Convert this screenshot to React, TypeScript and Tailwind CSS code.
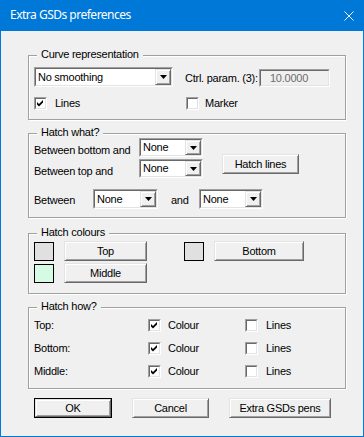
import React from "react";

const raised =
  "border border-t-[#e3e3e3] border-l-[#e3e3e3] border-b-[#696969] border-r-[#696969] bg-[#f0f0f0] shadow-[inset_1px_1px_0_#ffffff,inset_-1px_-1px_0_#a0a0a0]";
const sunkenOuter =
  "border border-t-[#a0a0a0] border-l-[#a0a0a0] border-b-[#ffffff] border-r-[#ffffff]";
const sunkenInner =
  "border border-t-[#696969] border-l-[#696969] border-b-[#e3e3e3] border-r-[#e3e3e3]";

function Combo({ className, text }: { className: string; text: string }) {
  return (
    <div className={`flex ${sunkenOuter} ${className}`}>
      <div className={`flex min-w-0 flex-1 bg-white ${sunkenInner}`}>
        <div className="flex flex-1 items-center overflow-hidden whitespace-nowrap pl-[2px]">
          {text}
        </div>
        <div className={`flex w-[16px] items-center justify-center ${raised}`}>
          <svg width="7" height="4" viewBox="0 0 7 4">
            <path d="M0 0H7L3.5 4Z" fill="#000" />
          </svg>
        </div>
      </div>
    </div>
  );
}

function Btn({ className, children }: { className: string; children: React.ReactNode }) {
  return (
    <div className={`flex items-center justify-center whitespace-nowrap ${raised} ${className}`}>
      {children}
    </div>
  );
}

function Check({ on }: { on?: boolean }) {
  return (
    <div className={`h-[13px] w-[13px] shrink-0 ${sunkenOuter}`}>
      <div className={`flex h-full w-full items-center justify-center bg-white ${sunkenInner}`}>
        {on && (
          <svg width="7" height="7" viewBox="0 0 7 7">
            <path d="M0 2L2 4L6 0L6 2.6L2 6.6L0 4.6Z" fill="#000" />
          </svg>
        )}
      </div>
    </div>
  );
}

function Swatch({ className }: { className: string }) {
  return <div className={`h-[19px] w-[20px] border border-black ${className}`} />;
}

function Group({
  title,
  className,
  children,
}: {
  title: string;
  className: string;
  children: React.ReactNode;
}) {
  return (
    <div
      className={`relative w-[318px] border border-[#a0a0a0] shadow-[inset_1px_1px_0_#ffffff,1px_1px_0_#ffffff] ${className}`}
    >
      <div className="absolute left-[8px] top-[-8px] whitespace-nowrap bg-[#f0f0f0] px-[4px]">
        {title}
      </div>
      {children}
    </div>
  );
}

function HowRow({ label }: { label: string }) {
  return (
    <div className="flex h-[23px] items-center">
      <div className="w-[114px]">{label}</div>
      <div className="flex w-[97px] items-center">
        <Check on />
        <span className="ml-[7px]">Colour</span>
      </div>
      <div className="flex items-center">
        <Check />
        <span className="ml-[8px]">Lines</span>
      </div>
    </div>
  );
}

export default function App() {
  return (
    <div className="flex h-[437px] w-[364px] flex-col bg-[#0078d7] px-[1px] pb-[1px] font-['Liberation_Sans',Arial,sans-serif] text-[11px] leading-[13px] tracking-[-0.25px] text-black">
      <div className="-mx-[1px] flex h-[31px] shrink-0 items-center pb-[2px] pl-[10px] pr-[10px] font-['Noto_Sans',sans-serif] text-[12px] leading-[16px] tracking-[-0.5px] text-white">
        <span>Extra GSDs preferences</span>
        <svg className="ml-auto mt-[2px]" width="10" height="10" viewBox="0 0 10 10">
          <path d="M0.5 0.5L9.5 9.5M9.5 0.5L0.5 9.5" stroke="#ffffff" strokeWidth="1" />
        </svg>
      </div>
      <div className="flex flex-1 flex-col bg-[#f0f0f0] pl-[27px] pt-[24px]">
        <Group title="Curve representation" className="h-[65px]">
          <div className="flex flex-col pl-[5px] pt-[11px]">
            <div className="flex h-[20px]">
              <Combo className="h-[20px] w-[139px]" text="No smoothing" />
              <div className="ml-[12px] w-[74px] whitespace-nowrap pt-[5px]">Ctrl. param. (3):</div>
              <div className={`mt-[2px] h-[18px] w-[71px] ${sunkenOuter}`}>
                <div
                  className={`flex h-full w-full items-center bg-[#f0f0f0] pl-[9px] text-[#6d6d6d] ${sunkenInner}`}
                >
                  10.0000
                </div>
              </div>
            </div>
            <div className="mt-[10px] flex h-[13px] items-center">
              <div className="flex w-[152px] items-center">
                <Check on />
                <span className="ml-[8px]">Lines</span>
              </div>
              <div className="flex items-center">
                <Check />
                <span className="ml-[6px]">Marker</span>
              </div>
            </div>
          </div>
        </Group>

        <Group title="Hatch what?" className="mt-[13px] h-[85px]">
          <div className="flex flex-col pl-[5px] pt-[4px]">
            <div className="flex">
              <div className="flex flex-col">
                <div className="flex h-[19px]">
                  <div className="w-[105px] whitespace-nowrap pt-[6px]">Between bottom and</div>
                  <Combo className="h-[19px] w-[64px]" text="None" />
                </div>
                <div className="mt-[2px] flex h-[19px]">
                  <div className="w-[105px] whitespace-nowrap pt-[6px]">Between top and</div>
                  <Combo className="h-[19px] w-[64px]" text="None" />
                </div>
              </div>
              <Btn className="ml-[19px] mt-[16px] h-[20px] w-[77px]">Hatch lines</Btn>
            </div>
            <div className="mt-[11px] flex h-[20px]">
              <div className="w-[59px] pt-[5px]">Between</div>
              <Combo className="h-[20px] w-[65px]" text="None" />
              <div className="w-[41px] pl-[13px] pt-[5px]">and</div>
              <Combo className="h-[20px] w-[64px]" text="None" />
            </div>
          </div>
        </Group>

        <Group title="Hatch colours" className="mt-[15px] h-[61px]">
          <div className="flex flex-col pl-[5px] pt-[7px]">
            <div className="flex h-[20px] items-center">
              <Swatch className="bg-[#e0e0e0]" />
              <Btn className="ml-[10px] h-[20px] w-[83px]">Top</Btn>
              <Swatch className="ml-[37px] bg-[#e0e0e0]" />
              <Btn className="ml-[10px] h-[20px] w-[90px]">Bottom</Btn>
            </div>
            <div className="mt-[2px] flex h-[20px] items-center">
              <Swatch className="bg-[#d5fbe5]" />
              <Btn className="ml-[10px] h-[20px] w-[83px]">Middle</Btn>
            </div>
          </div>
        </Group>

        <Group title="Hatch how?" className="mt-[13px] h-[82px]">
          <div className="flex flex-col pl-[5px] pt-[6px]">
            <HowRow label="Top:" />
            <HowRow label="Bottom:" />
            <HowRow label="Middle:" />
          </div>
        </Group>

        <div className="ml-[6px] mt-[9px] flex">
          <div className="h-[20px] w-[78px] border border-black">
            <Btn className="h-full w-full">OK</Btn>
          </div>
          <Btn className="ml-[20px] h-[20px] w-[77px]">Cancel</Btn>
          <Btn className="ml-[20px] h-[20px] w-[102px]">Extra GSDs pens</Btn>
        </div>
      </div>
    </div>
  );
}
